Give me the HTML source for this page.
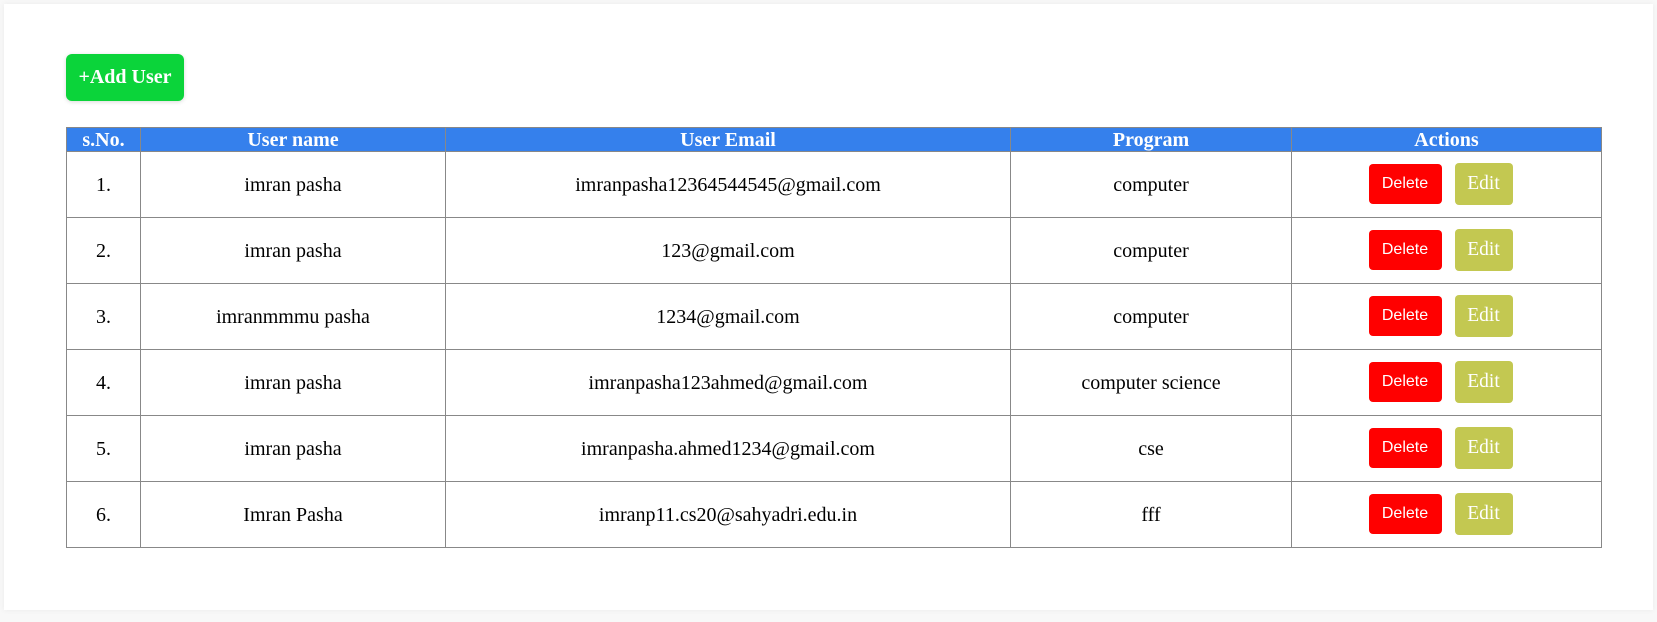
<!DOCTYPE html>
<html><head><style>
html,body{margin:0;padding:0;background:#f8f8f8;width:1657px;height:622px;overflow:hidden}
.card{position:absolute;left:4px;top:4px;width:1649px;height:606px;background:#fff;box-shadow:0 0 6px rgba(0,0,0,0.06)}
.add{position:absolute;left:66px;top:54px;width:118px;height:47px;background:#0bd43a;border-radius:6px;color:#fff;font:bold 20px "Liberation Serif",serif;line-height:47px;text-align:center;box-shadow:0 1px 4px rgba(0,0,0,0.15)}
table{position:absolute;left:66px;top:127px;width:1536px;border-collapse:collapse;font-family:"Liberation Serif",serif;font-size:20px;color:#000}
th{background:#3580ec;color:#fff;font-weight:bold;height:23px;padding:0;border:1px solid #888;line-height:20px}
td{height:63px;padding:2px 0 0 0;border:1px solid #888;text-align:center}
.w{position:relative;left:-6px;top:-2px;white-space:nowrap;font-size:0}
.d{display:inline-block;width:73px;height:40px;background:#ff0000;color:#fff;border-radius:4px;font:16px "Liberation Sans",sans-serif;line-height:40px;vertical-align:middle}
.e{display:inline-block;width:58px;height:42px;background:#c3c851;color:#fff;border-radius:4px;font:19.5px "Liberation Serif",serif;line-height:42px;margin-left:13px;vertical-align:middle}
</style></head><body>
<div class="card"></div>
<div class="add">+Add User</div>
<table>
<tr><th style="width:73px">s.No.</th><th style="width:304px">User name</th><th style="width:564px">User Email</th><th style="width:280px">Program</th><th>Actions</th></tr>
<tr><td>1.</td><td>imran pasha</td><td>imranpasha12364544545@gmail.com</td><td>computer</td><td><div class="w"><span class="d">Delete</span><span class="e">Edit</span></div></td></tr>
<tr><td>2.</td><td>imran pasha</td><td>123@gmail.com</td><td>computer</td><td><div class="w"><span class="d">Delete</span><span class="e">Edit</span></div></td></tr>
<tr><td>3.</td><td>imranmmmu pasha</td><td>1234@gmail.com</td><td>computer</td><td><div class="w"><span class="d">Delete</span><span class="e">Edit</span></div></td></tr>
<tr><td>4.</td><td>imran pasha</td><td>imranpasha123ahmed@gmail.com</td><td>computer science</td><td><div class="w"><span class="d">Delete</span><span class="e">Edit</span></div></td></tr>
<tr><td>5.</td><td>imran pasha</td><td>imranpasha.ahmed1234@gmail.com</td><td>cse</td><td><div class="w"><span class="d">Delete</span><span class="e">Edit</span></div></td></tr>
<tr><td>6.</td><td>Imran Pasha</td><td>imranp11.cs20@sahyadri.edu.in</td><td>fff</td><td><div class="w"><span class="d">Delete</span><span class="e">Edit</span></div></td></tr>
</table>
</body></html>
